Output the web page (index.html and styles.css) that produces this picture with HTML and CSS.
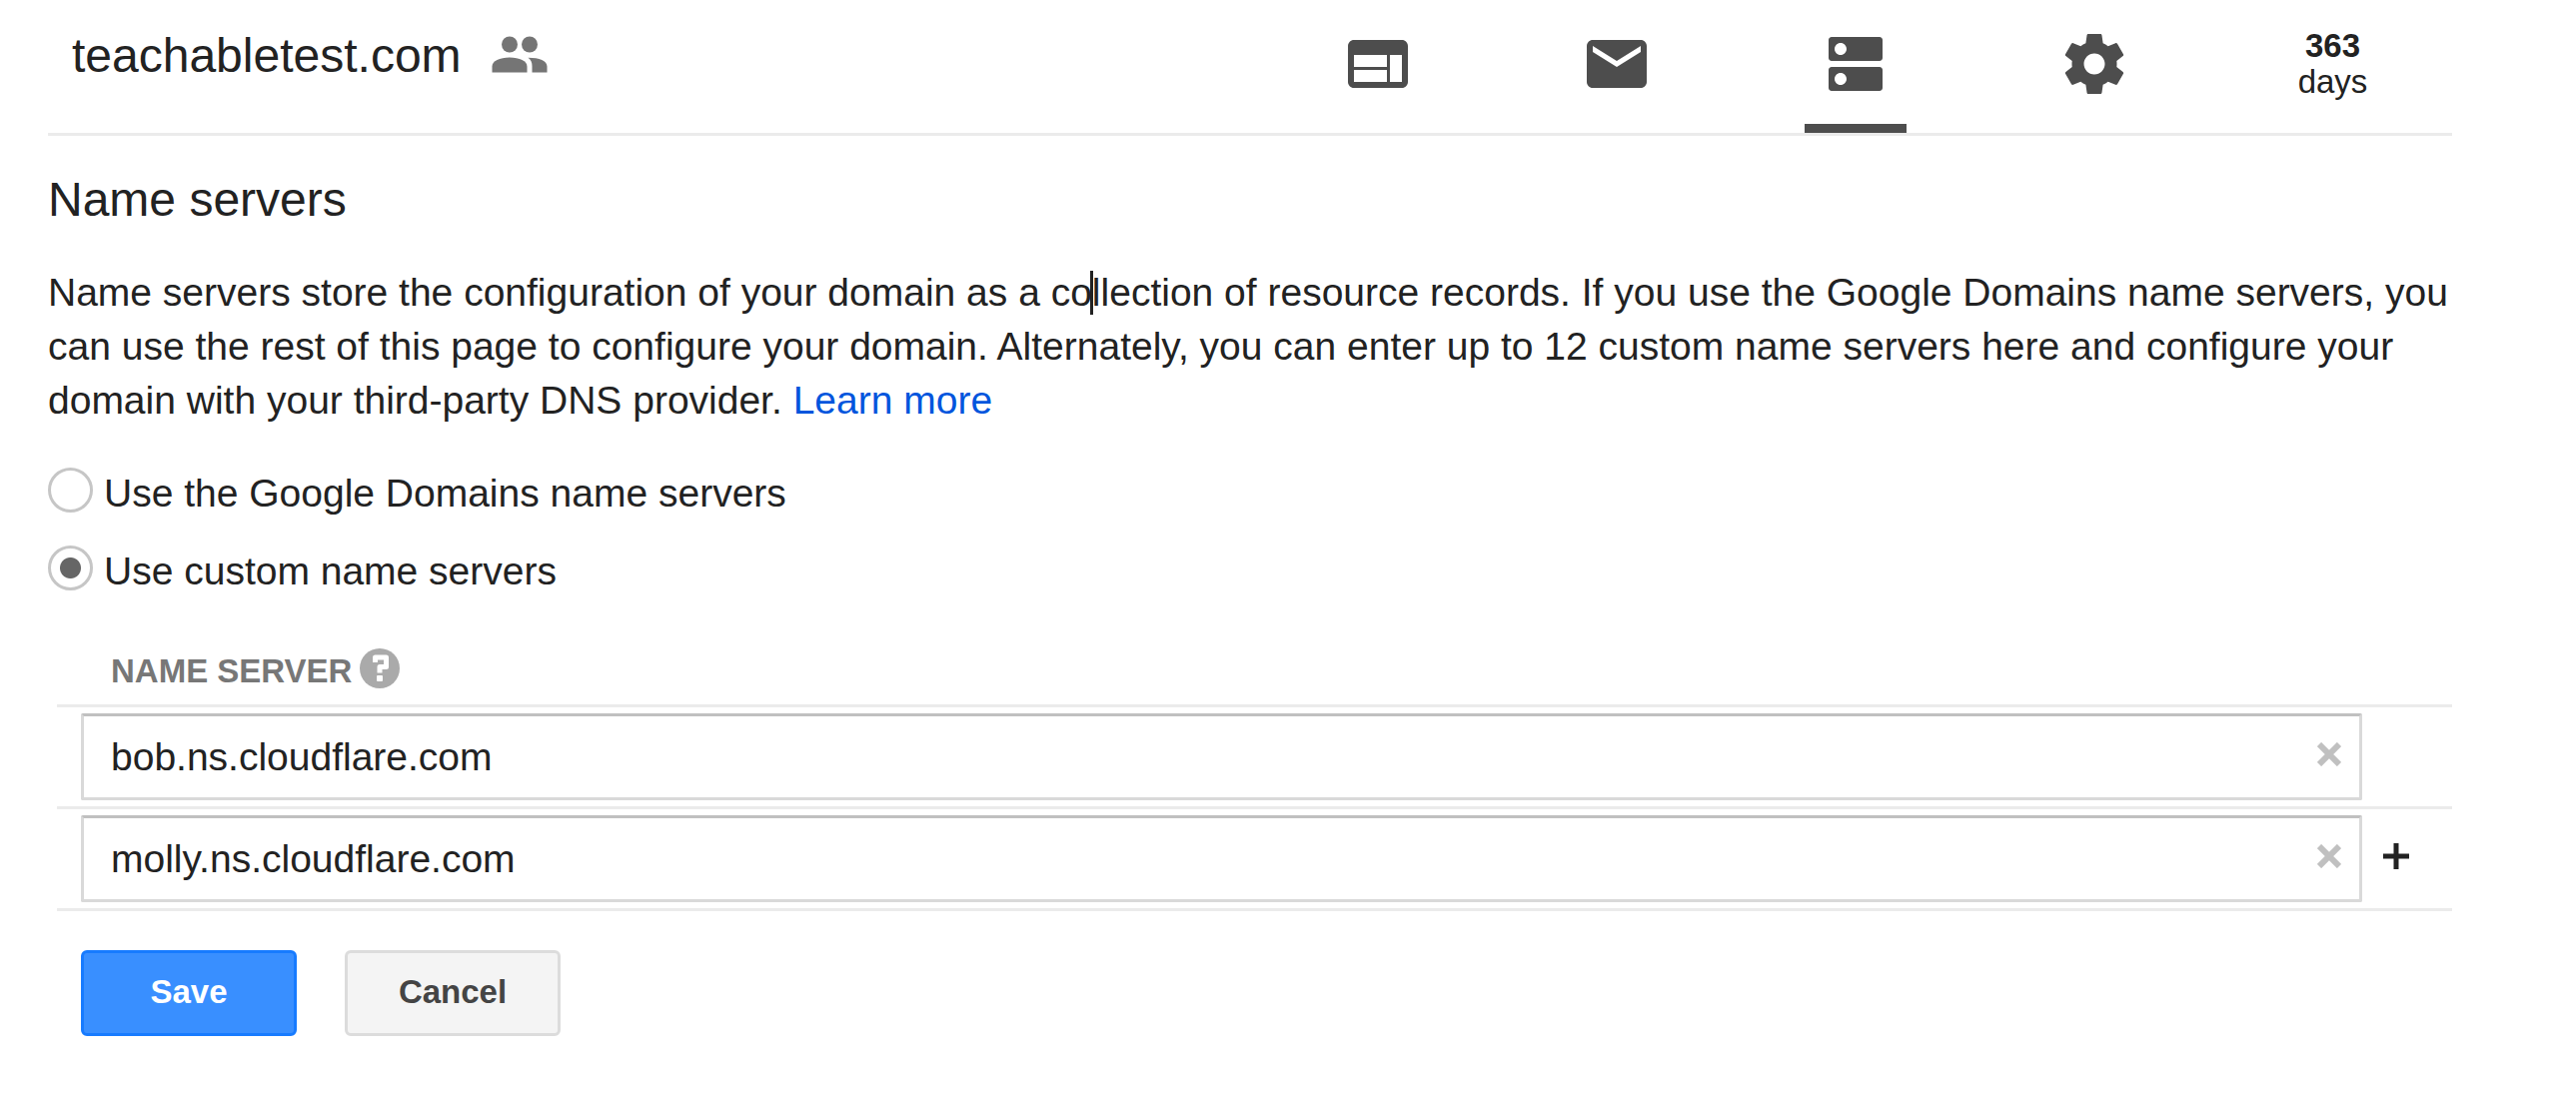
FILE: index.html
```html
<!DOCTYPE html>
<html lang="en">
<head>
    <meta charset="UTF-8">
    <meta name="viewport" content="width=device-width, initial-scale=1.0">
    <title>teachabletest.com - Name servers</title>
    <link rel="stylesheet" href="styles.css">
</head>
<body>
    <!-- Domain header -->
    <header class="domain-header">
        <div class="domain-title">
            <span>teachabletest.com</span>
            <svg class="people-icon" viewBox="0 0 60 60" aria-hidden="true">
                <circle cx="20" cy="19.5" r="8"/>
                <circle cx="40" cy="19.5" r="8"/>
                <path d="M2.500 47.500V41.500C2.500 36 10 32.500 20 32.500C30 32.500 37.500 36 37.500 41.500V47.500Z"/>
                <path d="M38.500 32.700C50 32.700 57.500 36 57.500 41.500V47.500H42.500V41.500C42.500 37.500 41.500 35 38.500 32.700Z"/>
            </svg>
        </div>
        <nav class="domain-nav">
            <a class="nav-item" href="#" aria-label="Website">
                <svg viewBox="0 0 24 24"><path d="M20 4H4c-1.1 0-1.99.9-1.99 2L2 18c0 1.1.9 2 2 2h16c1.1 0 2-.9 2-2V6c0-1.1-.9-2-2-2zm-5 14H4v-4h11v4zm0-5H4V9h11v4zm5 5h-4V9h4v9z"/></svg>
            </a>
            <a class="nav-item" href="#" aria-label="Email">
                <svg viewBox="0 0 24 24"><path d="M20 4H4c-1.1 0-1.99.9-1.99 2L2 18c0 1.1.9 2 2 2h16c1.1 0 2-.9 2-2V6c0-1.1-.9-2-2-2zm0 4l-8 5-8-5V6l8 5 8-5v2z"/></svg>
            </a>
            <a class="nav-item active" href="#" aria-label="DNS">
                <svg viewBox="0 0 24 24"><path d="M20 13H4c-.55 0-1 .45-1 1v6c0 .55.45 1 1 1h16c.55 0 1-.45 1-1v-6c0-.55-.45-1-1-1zM7 19c-1.1 0-2-.9-2-2s.9-2 2-2 2 .9 2 2-.9 2-2 2zM20 3H4c-.55 0-1 .45-1 1v6c0 .55.45 1 1 1h16c.55 0 1-.45 1-1V4c0-.55-.45-1-1-1zM7 9c-1.1 0-2-.9-2-2s.9-2 2-2 2 .9 2 2-.9 2-2 2z"/></svg>
            </a>
            <a class="nav-item" href="#" aria-label="Settings">
                <svg viewBox="0 0 24 24"><path d="M19.43 12.98c.04-.32.07-.64.07-.98s-.03-.66-.07-.98l2.11-1.65c.19-.15.24-.42.12-.64l-2-3.46c-.12-.22-.39-.3-.61-.22l-2.49 1c-.52-.4-1.08-.73-1.69-.98l-.38-2.65C14.46 2.18 14.25 2 14 2h-4c-.25 0-.46.18-.49.42l-.38 2.65c-.61.25-1.17.59-1.69.98l-2.49-1c-.23-.09-.49 0-.61.22l-2 3.46c-.13.22-.07.49.12.64l2.11 1.65c-.04.32-.07.65-.07.98s.03.66.07.98l-2.11 1.65c-.19.15-.24.42-.12.64l2 3.46c.12.22.39.3.61.22l2.49-1c.52.4 1.08.73 1.69.98l.38 2.65c.03.24.24.42.49.42h4c.25 0 .46-.18.49-.42l.38-2.65c.61-.25 1.17-.59 1.69-.98l2.49 1c.23.09.49 0 .61-.22l2-3.46c.12-.22.07-.49-.12-.64l-2.11-1.65zM12 15.5c-1.93 0-3.5-1.57-3.5-3.5s1.57-3.5 3.5-3.5 3.5 1.57 3.5 3.5-1.57 3.5-3.5 3.5z"/></svg>
            </a>
            <a class="nav-item days" href="#"><strong>363</strong><span>days</span></a>
        </nav>
    </header>

    <!-- Name servers -->
    <main>
        <h1>Name servers</h1>
        <p class="description">Name servers store the configuration of your domain as a co<span class="caret"></span>llection of resource records. If you use the Google Domains name servers, you can use the rest of this page to configure your domain. Alternately, you can enter up to 12 custom name servers here and configure your domain with your third-party DNS provider. <a href="#">Learn more</a></p>

        <form>
            <div class="options">
                <label class="option"><input type="radio" name="ns" value="google"> Use the Google Domains name servers</label>
                <label class="option"><input type="radio" name="ns" value="custom" checked> Use custom name servers</label>
            </div>

            <table class="servers">
                <thead>
                    <tr>
                        <th colspan="2">
                            <div class="th-label">
                                <span id="ns-label">NAME SERVER</span>
                                <svg class="help-icon" viewBox="0 0 40 40" aria-hidden="true">
                                    <circle cx="20" cy="20" r="20"/>
                                    <path d="M15.500 14V9H26.500V18.500H20V24.500"/>
                                    <rect x="17" y="27" width="6" height="6" rx="1"/>
                                </svg>
                            </div>
                        </th>
                    </tr>
                </thead>
                <tbody>
                    <tr>
                        <td class="server">
                            <div class="field">
                                <input type="text" value="bob.ns.cloudflare.com" aria-labelledby="ns-label">
                                <button type="button" class="clear" aria-label="Remove">
                                    <svg viewBox="0 0 24 24"><path d="M2 2L22 22M22 2L2 22"/></svg>
                                </button>
                            </div>
                        </td>
                        <td class="action"></td>
                    </tr>
                    <tr>
                        <td class="server">
                            <div class="field">
                                <input type="text" value="molly.ns.cloudflare.com" aria-labelledby="ns-label">
                                <button type="button" class="clear" aria-label="Remove">
                                    <svg viewBox="0 0 24 24"><path d="M2 2L22 22M22 2L2 22"/></svg>
                                </button>
                            </div>
                        </td>
                        <td class="action">
                            <button type="button" class="add" aria-label="Add name server">
                                <svg viewBox="0 0 26 26"><path d="M13 0V26M0 13H26"/></svg>
                            </button>
                        </td>
                    </tr>
                </tbody>
            </table>

            <div class="buttons">
                <button type="button" class="btn save">Save</button>
                <button type="button" class="btn cancel">Cancel</button>
            </div>
        </form>
    </main>
</body>
</html>
```

FILE: styles.css
```css
* {
    box-sizing: border-box;
}

body {
    margin: 0;
    padding: 0 124px 48px 48px;
    background: #fff;
    color: #222;
    font-family: "Liberation Sans", Arial, sans-serif;
    font-size: 39px;
}

button, input {
    font-family: inherit;
    margin: 0;
}

/* Header */
.domain-header {
    display: flex;
    justify-content: space-between;
    height: 136px;
    border-bottom: 3px solid #ebebeb;
}

.domain-title {
    display: flex;
    gap: 28px;
    padding: 29px 0 0 24px;
    font-size: 48px;
    line-height: 54px;
}

.people-icon {
    width: 60px;
    height: 60px;
    margin-top: -4px;
    fill: #757575;
}

.domain-nav {
    display: flex;
}

.nav-item {
    display: flex;
    flex-direction: column;
    align-items: center;
    justify-content: space-between;
    width: 239px;
    padding-top: 28px;
    color: #222;
    text-decoration: none;
}

.nav-item svg {
    width: 72px;
    height: 72px;
    fill: #4d4d4d;
}

.nav-item.active::after {
    content: "";
    width: 102px;
    height: 9px;
    background: #4d4d4d;
}

.nav-item.days {
    justify-content: flex-start;
    font-size: 33px;
    line-height: 36px;
}

/* Content */
h1 {
    margin: 37px 0 39px;
    font-size: 48px;
    font-weight: normal;
    line-height: 54px;
}

.description {
    margin: 0 0 40px;
    line-height: 54px;
}

.description a {
    color: #0055dd;
    text-decoration: none;
}

.caret {
    position: relative;
}

.caret::before {
    content: "";
    position: absolute;
    top: 0;
    left: -2px;
    width: 3px;
    height: 44px;
    background: #222;
}

.options {
    display: flex;
    flex-direction: column;
    align-items: flex-start;
    gap: 27px;
}

.option {
    display: flex;
    gap: 11px;
    line-height: 51px;
}

.option input {
    appearance: none;
    width: 45px;
    height: 45px;
    border: 3px solid #c6c6c6;
    border-radius: 50%;
    background: #fff;
}

.option input:checked {
    background: radial-gradient(circle, #666 10px, #fff 11px);
}

/* Server table */
.servers {
    width: calc(100% - 9px);
    margin: 52px 0 39px 9px;
    border-collapse: separate;
    border-spacing: 0;
}

.servers th {
    padding: 0 0 10px 54px;
    border-bottom: 3px solid #ebebeb;
    color: #777;
    font-size: 33px;
    line-height: 46px;
}

.th-label {
    display: flex;
    gap: 8px;
}

.help-icon {
    width: 40px;
    height: 40px;
    fill: #aaa;
}

.help-icon path {
    fill: none;
    stroke: #fff;
    stroke-width: 5;
    stroke-linejoin: round;
}

.help-icon rect {
    fill: #fff;
}

.servers td {
    padding: 6px 0;
    border-bottom: 3px solid #ebebeb;
    vertical-align: top;
}

.servers .server {
    padding-left: 24px;
}

.servers .action {
    width: 90px;
}

.field {
    position: relative;
    display: flex;
}

.field input {
    flex: 1;
    height: 87px;
    padding: 0 72px 0 27px;
    border: 3px solid #d9d9d9;
    border-top-color: #c0c0c0;
    border-radius: 2px;
    background: #fff;
    color: #222;
    font-size: 39px;
}

.clear, .add {
    display: flex;
    align-items: center;
    justify-content: center;
    padding: 0;
    border: 0;
    background: none;
}

.clear {
    position: absolute;
    top: 20px;
    right: 12px;
    width: 42px;
    height: 42px;
}

.clear svg {
    width: 24px;
    height: 24px;
    stroke: #c0c0c0;
    stroke-width: 6;
}

.add {
    width: 67px;
    height: 82px;
}

.add svg {
    width: 26px;
    height: 26px;
    stroke: #222;
    stroke-width: 5;
}

/* Buttons */
.buttons {
    display: flex;
    gap: 48px;
    margin-left: 33px;
}

.btn {
    width: 216px;
    height: 86px;
    padding: 0 0 2px;
    border: 3px solid #dcdcdc;
    border-radius: 6px;
    background: #f4f4f4;
    color: #444;
    font-size: 33px;
    font-weight: bold;
}

.save {
    border-color: #177bff;
    background: #398fff;
    color: #fff;
}
```
